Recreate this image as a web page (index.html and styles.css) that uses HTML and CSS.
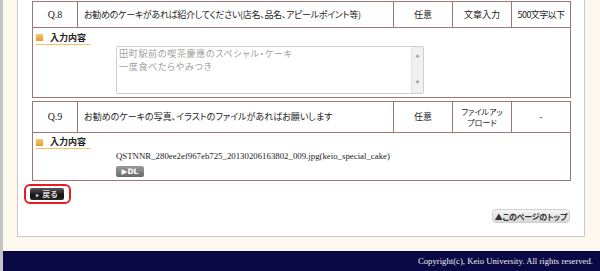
FILE: index.html
```html
<!DOCTYPE html>
<html lang="ja">
<head>
  <meta charset="UTF-8" />
  <title>アンケート回答確認</title>
  <link rel="stylesheet" href="styles.css">
</head>
<body>
  <div class="page">
    <div class="panel">
      <table class="qa">
        <colgroup>
          <col class="c-no"><col class="c-text"><col class="c-req"><col class="c-type"><col class="c-limit">
        </colgroup>
        <tr class="qrow">
          <td class="qno">Q.8</td>
          <td class="qtext">お勧めのケーキがあれば紹介してください(店名、品名、アピールポイント等)</td>
          <td>任意</td>
          <td>文章入力</td>
          <td class="qlimit">500文字以下</td>
        </tr>
        <tr>
          <td colspan="5" class="answer">
            <div class="ans-label"><span class="mark"></span>入力内容</div>
            <div class="ans-body">
              <div class="textbox">
                <div class="textbox-text">田町駅前の喫茶慶應のスペシャル・ケーキ<br>一度食べたらやみつき</div>
                <div class="scroll"><span>&#9650;</span><span>&#9660;</span></div>
              </div>
            </div>
          </td>
        </tr>
      </table>

      <table class="qa q9">
        <colgroup>
          <col class="c-no"><col class="c-text"><col class="c-req"><col class="c-type"><col class="c-limit">
        </colgroup>
        <tr class="qrow">
          <td class="qno">Q.9</td>
          <td class="qtext">お勧めのケーキの写真、イラストのファイルがあればお願いします</td>
          <td>任意</td>
          <td class="qtype-small">ファイルアッ<br>プロード</td>
          <td>-</td>
        </tr>
        <tr>
          <td colspan="5" class="answer">
            <div class="ans-label"><span class="mark"></span>入力内容</div>
            <div class="ans-body">
              <div class="filename">QSTNNR_280ee2ef967eb725_20130206163802_009.jpg(keio_special_cake)</div>
              <a class="btn-dl">&#9654;DL</a>
            </div>
          </td>
        </tr>
      </table>

      <div class="actions">
        <span class="back-ring"><a class="btn-back"><span class="arrow">&#9656;</span>戻る</a></span>
      </div>
      <div class="totop-row">
        <a class="btn-top">&#9650;このページのトップ</a>
      </div>
    </div>
  </div>
  <footer>Copyright(c), Keio University. All rights reserved.</footer>
</body>
</html>
```

FILE: styles.css
```css
body {
  margin: 0;
  background-color: #fdf8ee;
  border-left: 3px solid #c4c4c4;
  font-family: 'Noto Sans CJK JP', sans-serif;
  font-size: 9px;
  color: #222;
  font-feature-settings: "palt";
}
.page {
  padding: 0 15px 0 14px;
}
.panel {
  background: #fff;
  border: 1px solid #c8c8c8;
  border-top: none;
  padding: 1px 15px 13px 14px;
}
.qa {
  width: 538px;
  border-collapse: collapse;
  table-layout: fixed;
}
.qa td {
  border: 1px solid #9e7676;
  padding: 0;
  text-align: center;
  vertical-align: middle;
  line-height: 11px;
}
.c-no { width: 45px; }
.c-text { width: 316px; }
.c-req { width: 59px; }
.c-type { width: 59px; }
.c-limit { width: 59px; }
.qrow td {
  height: 25px;
}
.q9 {
  margin-top: 3px;
}
.q9 .qrow td {
  height: 30px;
}
.qa .qtext {
  text-align: left;
  padding-left: 6px;
  letter-spacing: -0.3px;
}
.q9 .qtext {
  letter-spacing: 0;
}
.qno {
  font-family: 'Liberation Serif', serif;
  font-size: 10px;
}
.qlimit {
  letter-spacing: -0.6px;
}
.qtype-small {
  font-size: 8px;
  line-height: 11px;
}
.qa .answer {
  text-align: left;
  vertical-align: top;
  padding: 4px 0 3px 3px;
}
.ans-label {
  display: inline-flex;
  align-items: center;
  font-weight: bold;
  font-size: 9px;
  line-height: 10px;
  padding: 0 4px 1px 0;
  border-bottom: 1px solid #f4c068;
}
.mark {
  width: 7px;
  height: 7px;
  background: linear-gradient(#f9c870, #ee9a22);
  margin-right: 7px;
}
.ans-body {
  padding-left: 80px;
  margin-top: 1px;
}
.textbox {
  display: flex;
  width: 306px;
  height: 46px;
  border: 1px solid #cfcfcf;
  border-radius: 2px;
}
.textbox-text {
  flex: 1;
  color: #a0a0a0;
  font-size: 9px;
  line-height: 13px;
  padding: 0 2px;
  letter-spacing: 0.7px;
}
.scroll {
  width: 11px;
  background: #f0f0f0;
  border-left: 1px solid #e0e0e0;
  display: flex;
  flex-direction: column;
  justify-content: space-between;
  align-items: center;
  font-size: 4px;
  color: #999;
  padding: 4px 0 5px;
}
.filename {
  font-family: 'Liberation Serif', serif;
  font-size: 8.8px;
  line-height: 11px;
  color: #222;
  margin-top: 2px;
}
.btn-dl {
  display: inline-block;
  margin-top: 4px;
  width: 28px;
  height: 11px;
  line-height: 11px;
  background: linear-gradient(#9a9a9a, #6a6a6a);
  border-radius: 2px;
  color: #fff;
  font-family: 'DejaVu Sans', sans-serif;
  font-size: 7.5px;
  font-weight: bold;
  text-align: center;
}
.actions {
  margin-top: 3px;
  margin-left: -8px;
}
.back-ring {
  display: inline-block;
  border: 2px solid #e41c24;
  border-radius: 6px;
  padding: 2px 5px 2px 4px;
}
.btn-back {
  display: block;
  width: 34px;
  height: 12px;
  line-height: 12px;
  background: linear-gradient(#5a5a5a, #111 60%, #2a2a2a);
  border-radius: 2px;
  color: #ddd;
  font-weight: bold;
  font-size: 8px;
  text-align: center;
}
.arrow {
  font-size: 6px;
  margin-right: 3px;
  color: #ccc;
}
.totop-row {
  display: flex;
  justify-content: flex-end;
  margin-top: 5px;
  width: 538px;
}
.btn-top {
  display: block;
  width: 78px;
  height: 14px;
  line-height: 14px;
  background: linear-gradient(#f6f6f6, #d8d8d8);
  border: 1px solid #d0d0d0;
  box-sizing: border-box;
  border-radius: 4px;
  font-size: 8px;
  font-weight: bold;
  color: #333;
  text-align: center;
  letter-spacing: -0.2px;
}
footer {
  margin-top: 14px;
  height: 21px;
  background: #0b0945;
  border-bottom: 1px solid #8a8aa0;
  box-sizing: border-box;
  color: #eee;
  font-family: 'Liberation Serif', serif;
  font-size: 8.7px;
  line-height: 20px;
  text-align: right;
  padding-right: 7px;
}
```
